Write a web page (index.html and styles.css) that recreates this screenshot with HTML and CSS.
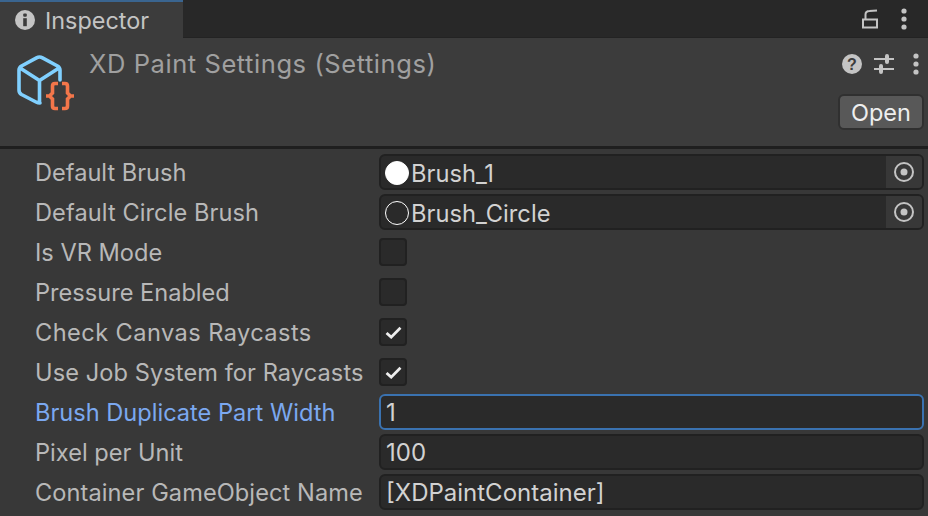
FILE: index.html
```html
<!DOCTYPE html>
<html lang="en">
<head>
    <meta charset="UTF-8">
    <title>Inspector</title>
    <link rel="stylesheet" href="styles.css">
</head>
<body>
    <div class="tabbar">
        <div class="tab">
            <svg class="tab-icon" width="20" height="20" viewBox="0 0 20 20">
                <circle cx="10" cy="10" r="10" fill="#c4c4c4"/>
                <rect x="8.2" y="3.6" width="3.6" height="3.2" rx="1" fill="#3c3c3c"/>
                <rect x="8.2" y="8.2" width="3.6" height="8" fill="#3c3c3c"/>
            </svg>
            <span>Inspector</span>
        </div>
        <div class="tabbar-tools">
            <svg width="16" height="20" viewBox="0 0 16 20" fill="none" stroke="#c4c4c4" stroke-width="2">
                <rect x="1" y="10.500" width="14" height="8"/>
                <path d="M3.500 10.500V5.500Q3.500 2 7.500 2L15 1.500"/>
            </svg>
            <svg width="6" height="22" viewBox="0 0 6 22" fill="#c4c4c4">
                <circle cx="3" cy="3" r="2.6"/><circle cx="3" cy="11" r="2.6"/><circle cx="3" cy="19" r="2.6"/>
            </svg>
        </div>
    </div>
    <header class="header">
        <svg class="asset-icon" width="58" height="57" viewBox="0 0 58 57" fill="none">
            <path d="M2 16 Q2 13.500 4.500 12 L19.500 3.800 Q22.500 2.200 25.500 3.800 L40.500 12 Q43 13.500 43 16 V26 M2 16 V36 Q2 39 4.500 40.500 L19 48 Q21 49 23 49 M3 14 L22.500 26.500 L42 14 M22.500 26.500 V48" stroke="#80d0ff" stroke-width="3.600" stroke-linejoin="round" stroke-linecap="round"/>
            <path d="M41 29.500 H38 Q35.500 29.500 35.500 32 V39 L32.500 42 L35.500 45 V52 Q35.500 54.500 38 54.500 H41 M29 42 H33" stroke="#f3764a" stroke-width="3.600"/>
            <path d="M45 29.500 H48 Q50.500 29.500 50.500 32 V39 L53.500 42 L50.500 45 V52 Q50.500 54.500 48 54.500 H45 M53 42 H57" stroke="#f3764a" stroke-width="3.600"/>
        </svg>
        <div class="title">XD Paint Settings (Settings)</div>
        <div class="header-side">
            <div class="header-tools">
                <svg class="help-icon" width="20" height="20" viewBox="0 0 20 20">
                    <circle cx="10" cy="10" r="10" fill="#c4c4c4"/>
                    <text class="help-mark" x="10" y="15.500" text-anchor="middle">?</text>
                </svg>
                <svg class="sliders-icon" width="20" height="20" viewBox="0 0 20 20" stroke="#c4c4c4" stroke-width="2" fill="#c4c4c4">
                    <path d="M0 5H20M0 15H20" fill="none"/>
                    <rect x="12" y="1" width="2" height="8" rx="1"/>
                    <rect x="6" y="11" width="2" height="8" rx="1"/>
                </svg>
                <svg width="6" height="22" viewBox="0 0 6 22" fill="#c4c4c4">
                    <circle cx="3" cy="3" r="2.6"/><circle cx="3" cy="11" r="2.6"/><circle cx="3" cy="19" r="2.6"/>
                </svg>
            </div>
            <button class="open-btn">Open</button>
        </div>
    </header>
    <div class="rows">
        <div class="row">
            <label>Default Brush</label>
            <div class="field object-field">
                <span class="swatch swatch-solid"></span><span class="value">Brush_1</span>
                <span class="picker"><svg width="20" height="20" viewBox="0 0 20 20"><circle cx="10" cy="10" r="9" fill="none" stroke="#c4c4c4" stroke-width="2"/><circle cx="10" cy="10" r="3.500" fill="#c4c4c4"/></svg></span>
            </div>
        </div>
        <div class="row">
            <label class="label-loose">Default Circle Brush</label>
            <div class="field object-field">
                <span class="swatch"></span><span class="value">Brush_Circle</span>
                <span class="picker"><svg width="20" height="20" viewBox="0 0 20 20"><circle cx="10" cy="10" r="9" fill="none" stroke="#c4c4c4" stroke-width="2"/><circle cx="10" cy="10" r="3.500" fill="#c4c4c4"/></svg></span>
            </div>
        </div>
        <div class="row">
            <label>Is VR Mode</label>
            <div class="check"></div>
        </div>
        <div class="row">
            <label>Pressure Enabled</label>
            <div class="check"></div>
        </div>
        <div class="row">
            <label class="label-wide">Check Canvas Raycasts</label>
            <div class="check"><svg width="17" height="13" viewBox="0 0 18 14"><path d="M1.500 7.500 L6.500 12 L16.500 2" fill="none" stroke="#eee" stroke-width="3"/></svg></div>
        </div>
        <div class="row">
            <label class="label-loose">Use Job System for Raycasts</label>
            <div class="check"><svg width="17" height="13" viewBox="0 0 18 14"><path d="M1.500 7.500 L6.500 12 L16.500 2" fill="none" stroke="#eee" stroke-width="3"/></svg></div>
        </div>
        <div class="row">
            <label class="focused-label">Brush Duplicate Part Width</label>
            <div class="field text-field focused">1</div>
        </div>
        <div class="row">
            <label>Pixel per Unit</label>
            <div class="field text-field">100</div>
        </div>
        <div class="row">
            <label class="label-loose">Container GameObject Name</label>
            <div class="field text-field">[XDPaintContainer]</div>
        </div>
    </div>
</body>
</html>
```

FILE: styles.css
```css
* {
    box-sizing: border-box;
}
html, body {
    margin: 0;
    height: 100%;
    overflow: hidden;
}
body {
    background: #383838;
    font-family: Inter, "Liberation Sans", sans-serif;
    font-size: 24px;
    color: #c4c4c4;
}
.tabbar {
    height: 38px;
    background: #282828;
    border-bottom: 1px solid #232323;
    display: flex;
    justify-content: space-between;
}
.tab {
    width: 183px;
    height: 38px;
    background: #3c3c3c;
    border-top: 2px solid #3a6590;
    display: flex;
    align-items: center;
    gap: 10px;
    padding-left: 15px;
    font-size: 23.4px;
    color: #c4c4c4;
}
.tabbar-tools {
    display: flex;
    align-items: center;
    gap: 23px;
    padding-right: 21px;
}
.header {
    height: 111px;
    background: #3c3c3c;
    border-bottom: 3px solid #1f1f1f;
    display: flex;
    position: relative;
    padding: 14px 4px 0 17px;
}
.asset-icon {
    margin-top: 2px;
}
.title {
    margin-left: 14px;
    color: #a0a0a0;
    font-size: 25.5px;
    letter-spacing: 0.57px;
    line-height: 24px;
}
.header-side {
    margin-left: auto;
    display: flex;
    flex-direction: column;
    align-items: flex-end;
}
.header-tools {
    display: flex;
    align-items: center;
    height: 24px;
    padding-right: 5px;
}
.sliders-icon {
    margin: 0 19px 0 12px;
}
.help-mark {
    font-family: "Liberation Sans", sans-serif;
    font-size: 16px;
    font-weight: 700;
    fill: #3c3c3c;
}
.open-btn {
    margin-top: 18px;
    width: 86px;
    height: 36px;
    background: #585858;
    border: 2px solid #303030;
    border-radius: 6px;
    color: #eeeeee;
    font: inherit;
    font-size: 23.5px;
    padding: 0;
}
.rows {
    padding: 3px 4px 0 35px;
}
.row {
    height: 40px;
    display: flex;
    align-items: center;
}
.row label {
    width: 344px;
    flex: none;
    color: #b8b8b8;
    font-size: 23.6px;
    padding-top: 1px;
    white-space: nowrap;
}
.row .label-loose {
    letter-spacing: 0.08px;
}
.row .label-wide {
    letter-spacing: 0.43px;
}
.row .focused-label {
    color: #7ba8f0;
}
.field {
    flex: 1;
    height: 36px;
    background: #2a2a2a;
    border: 2px solid #212121;
    border-radius: 6px;
    display: flex;
    align-items: center;
    color: #d2d2d2;
    padding-top: 1px;
}
.text-field {
    padding-left: 5px;
}
.focused {
    border-color: #3a72b0;
}
.object-field {
    padding: 0 0 0 4px;
}
.swatch {
    width: 24px;
    height: 24px;
    border-radius: 50%;
    border: 1px solid #fff;
    flex: none;
    margin: 2px 2px 0 0;
}
.swatch-solid {
    background: #fff;
}
.picker {
    margin-left: auto;
    width: 36px;
    height: 32px;
    background: #383838;
    display: flex;
    align-items: center;
    justify-content: center;
    border-radius: 0 4px 4px 0;
}
.value {
    font-size: 23.7px;
    padding-top: 2px;
}
.check {
    width: 28px;
    height: 28px;
    background: #2a2a2a;
    border: 2px solid #212121;
    border-radius: 4px;
    display: flex;
    align-items: center;
    justify-content: center;
}
```
